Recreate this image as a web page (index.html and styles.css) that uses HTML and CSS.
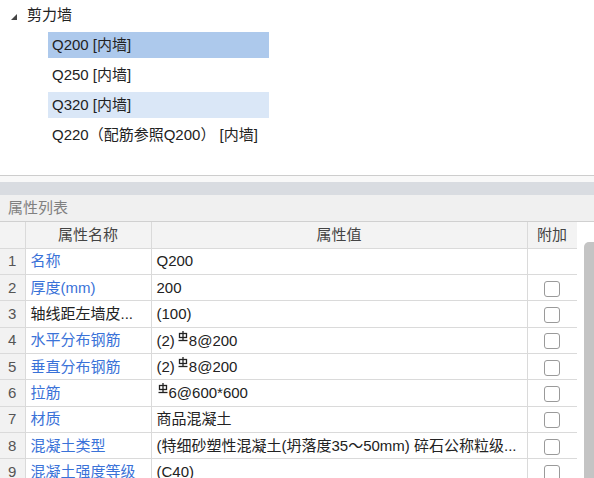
FILE: index.html
```html
<!DOCTYPE html>
<html lang="zh">
<head>
<meta charset="utf-8">
<link rel="stylesheet" href="styles.css">
</head>
<body>
<div class="tree">
  <div class="tree-root">
    <svg class="caret" width="6" height="6" viewBox="0 0 6 6"><polygon points="6,0 6,6 0,6" fill="#444"/></svg>
    <span class="root-label">剪力墙</span>
  </div>
  <div class="tree-item selected">Q200 [内墙]</div>
  <div class="tree-item">Q250 [内墙]</div>
  <div class="tree-item hover">Q320 [内墙]</div>
  <div class="tree-item">Q220（配筋参照Q200） [内墙]</div>
</div>
<div class="panel">
  <div class="strip"></div>
  <div class="band"></div>
  <div class="panel-title">属性列表</div>
  <div class="table-wrap">
    <table class="props">
      <colgroup><col class="c-num"><col class="c-name"><col class="c-val"><col class="c-add"></colgroup>
      <thead>
        <tr><th class="num"></th><th>属性名称</th><th>属性值</th><th>附加</th></tr>
      </thead>
      <tbody>
        <tr><td class="num">1</td><td class="name blue">名称</td><td class="val">Q200</td><td class="add"></td></tr>
        <tr><td class="num">2</td><td class="name blue">厚度(mm)</td><td class="val">200</td><td class="add"><span class="cb"></span></td></tr>
        <tr><td class="num">3</td><td class="name">轴线距左墙皮...</td><td class="val">(100)</td><td class="add"><span class="cb"></span></td></tr>
        <tr><td class="num">4</td><td class="name blue">水平分布钢筋</td><td class="val">(2)<svg class="rebar" width="10" height="11" viewBox="0 0 10 11"><rect x="1.5" y="2.5" width="7" height="4" fill="none" stroke="#222" stroke-width="1.3"/><line x1="5" y1="0" x2="5" y2="9.5" stroke="#222" stroke-width="1.3"/><line x1="0.5" y1="9.5" x2="9.5" y2="9.5" stroke="#222" stroke-width="1.3"/></svg>8@200</td><td class="add"><span class="cb"></span></td></tr>
        <tr><td class="num">5</td><td class="name blue">垂直分布钢筋</td><td class="val">(2)<svg class="rebar" width="10" height="11" viewBox="0 0 10 11"><rect x="1.5" y="2.5" width="7" height="4" fill="none" stroke="#222" stroke-width="1.3"/><line x1="5" y1="0" x2="5" y2="9.5" stroke="#222" stroke-width="1.3"/><line x1="0.5" y1="9.5" x2="9.5" y2="9.5" stroke="#222" stroke-width="1.3"/></svg>8@200</td><td class="add"><span class="cb"></span></td></tr>
        <tr><td class="num">6</td><td class="name blue">拉筋</td><td class="val"><svg class="rebar first" width="10" height="11" viewBox="0 0 10 11"><rect x="1.5" y="2.5" width="7" height="4" fill="none" stroke="#222" stroke-width="1.3"/><line x1="5" y1="0" x2="5" y2="9.5" stroke="#222" stroke-width="1.3"/><line x1="0.5" y1="9.5" x2="9.5" y2="9.5" stroke="#222" stroke-width="1.3"/></svg>6@600*600</td><td class="add"><span class="cb"></span></td></tr>
        <tr><td class="num">7</td><td class="name blue">材质</td><td class="val">商品混凝土</td><td class="add"><span class="cb"></span></td></tr>
        <tr><td class="num">8</td><td class="name blue">混凝土类型</td><td class="val">(特细砂塑性混凝土(坍落度35～50mm) 碎石公称粒级...</td><td class="add"><span class="cb"></span></td></tr>
        <tr><td class="num">9</td><td class="name blue">混凝土强度等级</td><td class="val">(C40)</td><td class="add"><span class="cb"></span></td></tr>
      </tbody>
    </table>
    <div class="scrollbar"><div class="thumb"></div></div>
  </div>
</div>
</body>
</html>
```

FILE: styles.css
```css
html, body {
  margin: 0;
  padding: 0;
  background: #ffffff;
}
body {
  width: 594px;
  height: 478px;
  overflow: hidden;
  font-family: "Liberation Sans", "Noto Sans CJK SC", sans-serif;
  font-size: 15px;
  line-height: 18px;
  color: #222;
}
.tree {
  height: 173px;
  padding-top: 2px;
  display: flex;
  flex-direction: column;
  gap: 4px;
}
.tree-root {
  height: 26px;
  display: flex;
  align-items: center;
}
.caret {
  margin-left: 11px;
  margin-top: 3px;
}
.root-label {
  margin-left: 10px;
}
.tree-item {
  margin-left: 48px;
  width: 217px;
  height: 26px;
  line-height: 26px;
  padding-left: 4px;
  white-space: nowrap;
}
.tree-item.selected { background: #adc9ec; }
.tree-item.hover { background: #dae7f7; }

.panel {
  border-top: 1px solid #cdcdcd;
}
.strip { height: 6px; background: #f8f8f8; }
.band { height: 13px; background: #d9dce1; }
.panel-title {
  height: 26px;
  line-height: 26px;
  padding-left: 8px;
  background: #f0f0f0;
  color: #808080;
  border-bottom: 1px solid #d0d0d0;
}
.table-wrap {
  display: grid;
  grid-template-columns: 577px 17px;
  align-items: start;
}
.props {
  border-collapse: collapse;
  table-layout: fixed;
  width: 577px;
}
.c-num { width: 25px; }
.c-name { width: 126px; }
.c-val { width: 376px; }
.c-add { width: 50px; }
.props tr { height: 26.3px; }
.props th, .props td {
  border: 1px solid #dadada;
  height: 25.3px;
  line-height: 18px;
  padding: 0 0 0 5px;
  white-space: nowrap;
  overflow: hidden;
  font-weight: normal;
}
.props tr > :first-child { border-left: none; }
.props thead tr > * { border-top: none; }
.props th {
  background: #f3f3f3;
  color: #444;
  text-align: center;
  padding: 0;
}
.props td.num {
  background: #f2f2f2;
  color: #555;
  text-align: center;
  padding: 0;
}
.props td.blue { color: #3a72d8; }
.props td.val { color: #222; }
.props td.add {
  text-align: center;
  padding: 0;
}
.rebar {
  vertical-align: 4px;
  margin: 0 1px 0 3px;
}
.rebar.first { margin-left: 1px; }
.cb {
  display: inline-block;
  width: 14px;
  height: 14px;
  border: 1px solid #9a9a9a;
  border-radius: 3px;
  vertical-align: middle;
  background: #fff;
}
.scrollbar {
  background: #ffffff;
  align-self: stretch;
}
.thumb {
  margin-top: 20px;
  margin-left: 7px;
  width: 12px;
  height: 300px;
  background: #c4c4c4;
  border-radius: 5px 0 0 0;
}
```
